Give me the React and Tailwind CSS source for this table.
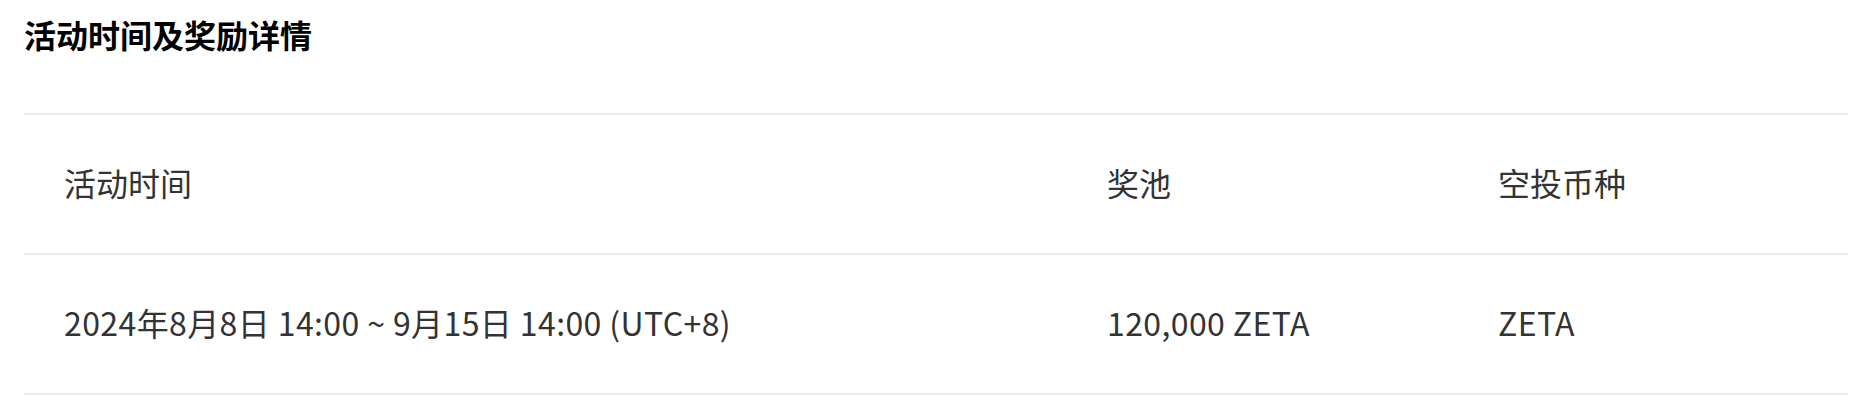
import React from 'react'

const font = { fontFamily: '"Noto Sans CJK SC", "Noto Sans", sans-serif' }

const columns = ['活动时间', '奖池', '空投币种']
const rows = [['2024年8月8日 14:00 ~ 9月15日 14:00 (UTC+8)', '120,000 ZETA', 'ZETA']]

const App = () => {
    return (
        <div className="bg-white w-[1876px] h-[410px] pl-6 pr-7 text-[#333]" style={font}>
            {/* Title */}
            <h2 className="pt-[14px] pb-[2px] text-[32px] leading-[40px] font-bold text-black">活动时间及奖励详情</h2>

            {/* Table */}
            <div className="mt-[57px] border-t-2 border-[#ebebeb]">
                <div className="grid grid-cols-[1043px_391px_1fr] h-[140px] items-center border-b-2 border-[#ebebeb]">
                    {columns.map(c => (
                        <div key={c} className="px-10 pb-1 text-[32px] leading-[40px]">{c}</div>
                    ))}
                </div>
                {rows.map((r, i) => (
                    <div key={i} className="grid grid-cols-[1043px_391px_1fr] h-[140px] items-center border-b-2 border-[#ebebeb]">
                        {r.map((cell, j) => (
                            <div key={j} className="px-10 pb-1 text-[32px] leading-[40px] tracking-[0.4px]">{cell}</div>
                        ))}
                    </div>
                ))}
            </div>
        </div>
    )
}

export default App
